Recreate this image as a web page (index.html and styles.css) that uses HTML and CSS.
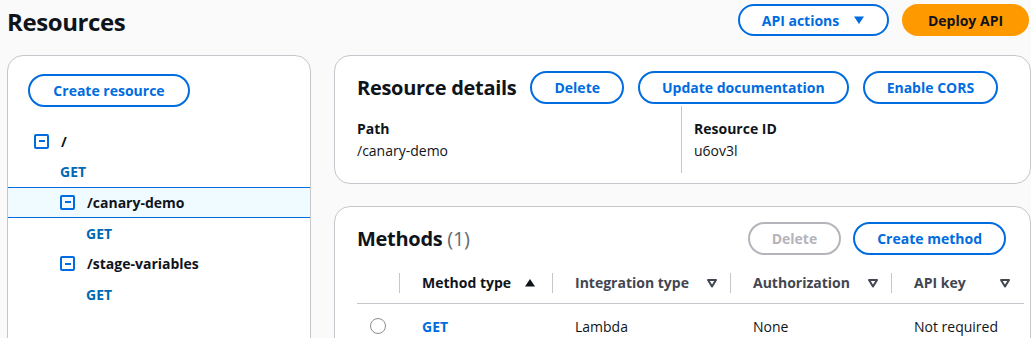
FILE: index.html
```html
<!DOCTYPE html>
<html>
<head>
<meta charset="utf-8">
<link rel="stylesheet" href="styles.css">
</head>
<body>
<header class="top">
  <h1 class="title">Resources</h1>
  <div class="top-actions">
    <button class="btn">API actions <svg class="caret" width="12" height="12" viewBox="0 0 12 12"><path d="M1 2.5h10L6 10z" fill="#006ce0"/></svg></button>
    <button class="btn primary">Deploy API</button>
  </div>
</header>
<div class="layout">
  <aside class="panel tree-panel">
    <div class="tree-head"><button class="btn">Create resource</button></div>
    <ul class="tree">
      <li class="node lvl0"><span class="box"></span><span class="res">/</span></li>
      <li class="method lvl0m">GET</li>
      <li class="node lvl1 selected"><span class="box"></span><span class="res">/canary-demo</span></li>
      <li class="method lvl1m">GET</li>
      <li class="node lvl1"><span class="box"></span><span class="res">/stage-variables</span></li>
      <li class="method lvl1m">GET</li>
    </ul>
  </aside>
  <main class="main">
    <section class="panel details">
      <div class="card-head">
        <h2>Resource details</h2>
        <button class="btn">Delete</button>
        <button class="btn">Update documentation</button>
        <button class="btn">Enable CORS</button>
      </div>
      <div class="kv">
        <div class="kv-col"><div class="k">Path</div><div class="v">/canary-demo</div></div>
        <div class="kv-col sep"><div class="k">Resource ID</div><div class="v">u6ov3l</div></div>
      </div>
    </section>
    <section class="panel methods">
      <div class="card-head between">
        <h2>Methods <span class="count">(1)</span></h2>
        <div class="head-actions">
          <button class="btn disabled">Delete</button>
          <button class="btn">Create method</button>
        </div>
      </div>
      <div class="table">
        <div class="tr th">
          <div class="c c0"></div>
          <div class="c c1"><span>Method type</span><svg width="12" height="12" viewBox="0 0 12 12"><path d="M1 9.5h10L6 2z" fill="#0f141a"/></svg></div>
          <div class="c c2"><span>Integration type</span><svg width="12" height="12" viewBox="0 0 12 12"><path d="M2 3h8L6 9.5z" fill="none" stroke="#424650" stroke-width="2" stroke-linejoin="round"/></svg></div>
          <div class="c c3"><span>Authorization</span><svg width="12" height="12" viewBox="0 0 12 12"><path d="M2 3h8L6 9.5z" fill="none" stroke="#424650" stroke-width="2" stroke-linejoin="round"/></svg></div>
          <div class="c c4"><span>API key</span><svg width="12" height="12" viewBox="0 0 12 12"><path d="M2 3h8L6 9.5z" fill="none" stroke="#424650" stroke-width="2" stroke-linejoin="round"/></svg></div>
        </div>
        <div class="tr td">
          <div class="c c0"><span class="radio"></span></div>
          <div class="c c1"><a class="link">GET</a></div>
          <div class="c c2">Lambda</div>
          <div class="c c3">None</div>
          <div class="c c4">Not required</div>
        </div>
      </div>
    </section>
  </main>
</div>
</body>
</html>
```
FILE: styles.css
```css
* { box-sizing: border-box; }
html, body { margin: 0; padding: 0; }
body {
  background: #fafafa;
  font-family: "Open Sans", "Noto Sans", sans-serif;
  color: #0f141a;
  font-size: 14px;
  width: 1031px;
  height: 338px;
  overflow: hidden;
}
.top {
  display: flex;
  justify-content: space-between;
  align-items: flex-start;
  padding: 4px 2px 0 7px;
  height: 55px;
}
.title {
  margin: 3px 0 0 0;
  font-size: 24px;
  font-weight: 700;
  letter-spacing: -0.4px;
  line-height: 30px;
}
.top-actions { display: flex; gap: 13px; }
.btn {
  font-family: inherit;
  font-size: 14px;
  font-weight: 700;
  color: #006ce0;
  background: #fff;
  border: 2px solid #006ce0;
  border-radius: 20px;
  height: 33px;
  padding: 0 22px;
  display: inline-flex;
  align-items: center;
  gap: 14px;
  cursor: pointer;
}
.top .btn { height: 32px; }
.top .btn:first-child { width: 151px; justify-content: center; padding: 0; }
.btn.primary {
  background: #ff9900;
  border-color: #ff9900;
  color: #0f141a;
  width: 127px;
  justify-content: center;
  padding: 0;
}
.btn.disabled { color: #b4b4bb; border-color: #b4b4bb; }
.layout {
  display: flex;
  gap: 23px;
  padding-left: 7px;
}
.panel {
  background: #fff;
  border: 1px solid #c6c6cd;
  border-radius: 16px;
}
.tree-panel {
  width: 304px;
  height: 300px;
  flex: none;
}
.tree-head { padding: 18px 0 0 20px; }
.tree-head .btn { width: 162px; justify-content: center; padding: 0; }
.tree { list-style: none; margin: 19px 0 0 0; padding: 0; }
.tree li { height: 30.6px; display: flex; align-items: center; font-weight: 700; }
.node { gap: 12px; }
.lvl0 { padding-left: 26px; }
.lvl0m { padding-left: 52px; }
.lvl1 { padding-left: 52px; }
.lvl1m { padding-left: 78px; }
.method { color: #006ab5; }
.res { color: #0f141a; }
.box {
  width: 15px;
  height: 15px;
  border: 2px solid #006ce0;
  border-radius: 2px;
  position: relative;
  display: inline-block;
}
.box::after {
  content: "";
  position: absolute;
  left: 2.5px;
  right: 2.5px;
  top: 4.5px;
  height: 2px;
  background: #006ce0;
}
.tree li.selected {
  background: #f0fbff;
  border-top: 1px solid #006ce0;
  border-bottom: 1px solid #006ce0;
}
.main { display: flex; flex-direction: column; gap: 22px; width: 697px; }
.details { height: 129px; }
.card-head {
  display: flex;
  align-items: center;
  gap: 14px;
  padding: 15px 24px 0 22px;
}
.card-head.between { justify-content: space-between; }
.card-head h2 {
  margin: 0;
  font-size: 20px;
  font-weight: 700;
  letter-spacing: -0.3px;
  line-height: 32px;
}
.count { color: #656871; font-weight: 400; }
.head-actions { display: flex; gap: 12px; }
.kv { display: flex; padding: 14px 22px 0 22px; }
.kv-col { width: 324px; line-height: 22px; }
.kv-col.sep {
  border-left: 1px solid #c6c6cd;
  padding-left: 12px;
  height: 67px;
  margin-top: -12px;
  padding-top: 12px;
}
.k { font-weight: 700; }
.methods { height: 160px; }
.table { padding: 11px 6px 0 22px; }
.tr { display: flex; align-items: center; }
.th { height: 38px; padding-bottom: 4px; border-bottom: 1px solid #c6c6cd; font-weight: 700; color: #424650; }
.td { height: 44px; }
.c { display: flex; align-items: center; justify-content: space-between; padding: 0 12px 0 23px; height: 100%; position: relative; }
.th .c + .c::before {
  content: "";
  position: absolute;
  left: 0;
  top: 7px;
  height: 20px;
  width: 1px;
  background: #c6c6cd;
}
.th .c1 { color: #0f141a; }
.c0 { width: 42px; padding: 0 0 0 13px; }
.c1 { width: 153px; padding-right: 16px; }
.c2 { width: 178px; }
.c3 { width: 161px; }
.c4 { width: 132px; }
.td .c { font-weight: 400; }
.link { color: #006ce0; font-weight: 700; }
.radio {
  width: 16px;
  height: 16px;
  border: 1.5px solid #8c8c94;
  border-radius: 50%;
  display: inline-block;
}
```
